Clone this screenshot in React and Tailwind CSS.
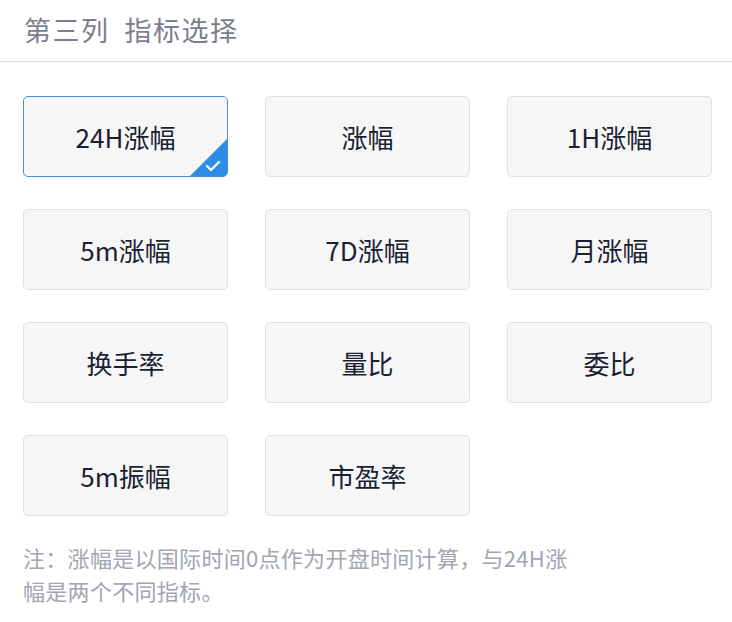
import React, { useState } from 'react';

const items = ['24H涨幅', '涨幅', '1H涨幅', '5m涨幅', '7D涨幅', '月涨幅', '换手率', '量比', '委比', '5m振幅', '市盈率'];

const font = { fontFamily: '"Noto Sans CJK SC", "Noto Sans", sans-serif' };

const App = () => {
  const [selected, setSelected] = useState('24H涨幅');

  return (
    <div className="w-[732px] h-[622px] bg-white" style={font}>
      <div className="h-[62px] px-6 flex items-center border-b border-[#dcdde3]">
        <h2 className="text-[27px] text-[#7b7e8e] tracking-[1.5px]">第三列&nbsp;&nbsp;指标选择</h2>
      </div>
      <div className="pt-[34px] pl-[23px] pr-[20px] grid grid-cols-3 gap-x-[37px] gap-y-[32px]">
        {items.map((item) => {
          const active = item === selected;
          return (
            <button
              key={item}
              onClick={() => setSelected(item)}
              className={`relative h-[81px] rounded-[5px] bg-[#f6f6f7] border overflow-hidden flex items-center justify-center text-[26px] text-[#1b1f33] ${
                active ? 'border-[#3d92e0]' : 'border-[#e0e0e2]'
              }`}
            >
              {item}
              {active && (
                <svg className="absolute right-0 bottom-0" width="37" height="37" viewBox="0 0 37 37">
                  <polygon points="37,0 37,37 0,37" fill="#2b8de6" />
                  <path d="M17 27 L21 31 L29 23" stroke="#fff" strokeWidth="2.4" fill="none" strokeLinecap="round" strokeLinejoin="round" />
                </svg>
              )}
            </button>
          );
        })}
      </div>
      <p className="mt-[25px] pl-[23px] w-[578px] text-[22px] leading-[33px] tracking-[0.3px] text-[#a3a5b0]">
        注：涨幅是以国际时间0点作为开盘时间计算，与24H涨幅是两个不同指标。
      </p>
    </div>
  );
};

export default App;
